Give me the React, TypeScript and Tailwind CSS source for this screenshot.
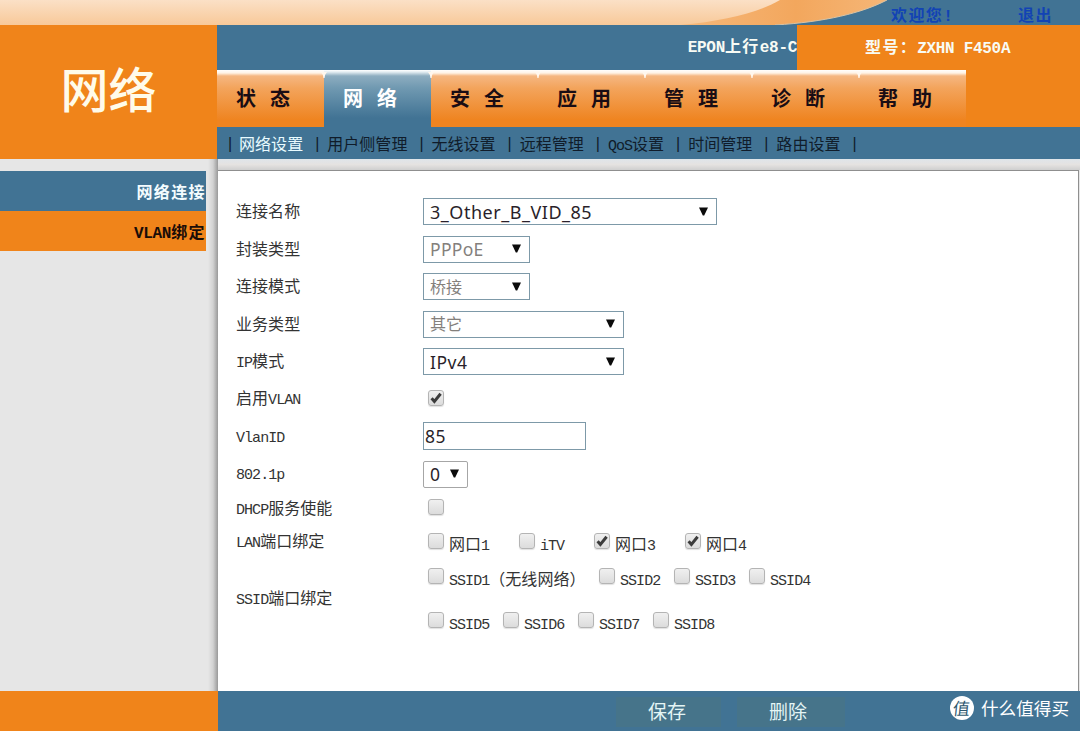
import type { ReactNode } from "react";
import clsx from "clsx";

const tabs = ["状态", "网络", "安全", "应用", "管理", "诊断", "帮助"];

const subTabs = [
  "网络设置",
  "用户侧管理",
  "无线设置",
  "远程管理",
  "QoS设置",
  "时间管理",
  "路由设置"
];

// Latin runs sit on a half-width grid next to the full-width Chinese glyphs.
function Mixed({ text, bold = false }: { text: string; bold?: boolean }) {
  const parts = text.split(/([\x20-\x7e]+)/).filter(Boolean);

  return (
    <span className="inline-block leading-5 whitespace-pre">
      {parts.map((part, index) =>
        /^[\x20-\x7e]/.test(part) ? (
          <span
            key={index}
            className={clsx(
              "font-['Liberation_Mono',monospace] leading-none",
              bold ? "text-[16px] tracking-[-0.3px]" : "text-[15px] tracking-[-0.95px]"
            )}
          >
            {part}
          </span>
        ) : (
          <span key={index} className={bold ? "tracking-[1.4px]" : "tracking-[0.05px]"}>
            {part}
          </span>
        )
      )}
    </span>
  );
}

function Banner() {
  return (
    <header className="relative h-[25px] bg-[#417394]">
      <svg className="absolute inset-0" width="1080" height="25" viewBox="0 0 1080 25">
        <defs>
          <linearGradient id="peach" x1="0" y1="0" x2="0" y2="1">
            <stop offset="0" stopColor="#fbe0c6" />
            <stop offset="1" stopColor="#f8c999" />
          </linearGradient>
          <linearGradient id="swoosh" x1="0" y1="0" x2="1" y2="0">
            <stop offset="0" stopColor="#f6bb80" />
            <stop offset="0.6" stopColor="#f3a75d" />
            <stop offset="1" stopColor="#f5b677" />
          </linearGradient>
        </defs>
        <path d="M660 0H887C862 13 825 22 775 25H660Z" fill="url(#swoosh)" />
        <path d="M887 0C862 13 825 22 775 25" fill="none" stroke="#d9c3a4" strokeWidth="1" />
        <path d="M0 0H780C758 13 725 21 680 25H0Z" fill="url(#peach)" />
      </svg>
      <div className="relative flex h-[28px] items-center pl-[891px] text-[16px] font-bold text-[#1243b4]">
        <div className="w-[127px]">
          <Mixed text="欢迎您!" bold />
        </div>
        <Mixed text="退出" bold />
      </div>
    </header>
  );
}

function MainTab({ label, active, last }: { label: string; active: boolean; last: boolean }) {
  return (
    <div
      className={clsx(
        "relative flex h-[57px] w-[107px] items-center justify-start gap-[14px] pb-[2px] pl-[19px] text-[20px] font-bold",
        active
          ? "bg-[linear-gradient(#ffffff_0px,#e3edf2_2px,#8dadc0_6px,#7099b1_18px,#417394_48px)] text-white"
          : "bg-[linear-gradient(#ffffff_0px,#fff3e6_3px,#f5b782_6px,#f3a45c_18px,#ef8420_50px)] text-[#1a0d14]"
      )}
    >
      <span>{label[0]}</span>
      <span>{label[1]}</span>
      {!last && (
        <svg className="absolute -right-[3px] top-0 z-10" width="6" height="8" viewBox="0 0 6 8">
          <path d="M0 2Q2 4 2.4 8H3.6Q4 4 6 2Z" fill="#fff7ee" />
        </svg>
      )}
    </div>
  );
}

function Separator({ className }: { className?: string }) {
  return (
    <span
      className={clsx(
        "w-[10px] pt-[2px] text-center font-['Liberation_Sans',sans-serif] text-[16px] leading-none",
        className
      )}
    >
      |
    </span>
  );
}

function Arrow() {
  return (
    <svg className="mb-[1px]" width="9" height="9" viewBox="0 0 9 9">
      <path d="M0 0.5H9L5.2 8.5H3.8Z" fill="#0b0b0b" />
    </svg>
  );
}

function SelectBox({
  value,
  className,
  disabled = false
}: {
  value: string;
  className: string;
  disabled?: boolean;
}) {
  return (
    <div
      className={clsx(
        "flex h-[27px] items-center justify-between border bg-white pl-[6px]",
        disabled ? "text-[#84807c]" : "text-[#2a1f2a]",
        className
      )}
    >
      <span className="font-['Noto_Sans','Noto_Sans_CJK_SC',sans-serif] leading-6">{value}</span>
      <Arrow />
    </div>
  );
}

function Check({ checked = false }: { checked?: boolean }) {
  return (
    <span className="block size-4 shrink-0 rounded-[3px] border border-[#b4b4b4] bg-linear-to-b from-[#f0f0f0] to-[#dcdcdc] shadow-[0_1px_1px_rgba(0,0,0,0.12)]">
      {checked && (
        <svg width="14" height="14" viewBox="0 0 14 14">
          <path
            d="M2.6 7.2L5.4 10.4L11.6 2.8"
            fill="none"
            stroke="#3c3c3c"
            strokeWidth="3"
          />
        </svg>
      )}
    </span>
  );
}

function PortOption({
  label,
  className,
  checked
}: {
  label: string;
  className: string;
  checked?: boolean;
}) {
  return (
    <div className={clsx("flex items-start gap-[5px]", className)}>
      <Check checked={checked} />
      <Mixed text={label} />
    </div>
  );
}

function Row({
  label,
  className = "h-[37.5px]",
  children
}: {
  label: string;
  className?: string;
  children: ReactNode;
}) {
  return (
    <div className={clsx("flex items-center", className)}>
      <div className="w-[187px] shrink-0 pb-[3px]">
        <Mixed text={label} />
      </div>
      {children}
    </div>
  );
}

function ConnectionForm() {
  return (
    <main className="w-[861px] border-t border-r border-[#8f8f8f] bg-white pt-[22px] pl-[18px] text-[16px] leading-5 text-[#333]">
      <Row label="连接名称">
        <SelectBox
          value="3_Other_B_VID_85"
          className="w-[294px] border-[#7d99a8] pr-[8px] text-[18px] tracking-[0.52px]"
        />
      </Row>
      <Row label="封装类型">
        <SelectBox
          value="PPPoE"
          className="w-[107px] border-[#7d99a8] pr-[8px] text-[17.5px] tracking-[0.3px]"
          disabled
        />
      </Row>
      <Row label="连接模式">
        <SelectBox value="桥接" className="w-[107px] border-[#7d99a8] pr-[8px] text-[16px]" disabled />
      </Row>
      <Row label="业务类型">
        <SelectBox value="其它" className="w-[201px] border-[#7d99a8] pr-[8px] text-[16px]" disabled />
      </Row>
      <Row label="IP模式">
        <SelectBox
          value="IPv4"
          className="w-[201px] border-[#7d99a8] pr-[8px] text-[17.5px] tracking-[0.5px]"
        />
      </Row>
      <Row label="启用VLAN">
        <div className="pb-[3px] pl-[5px]">
          <Check checked />
        </div>
      </Row>
      <Row label="VlanID">
        <div className="mb-[2px] flex h-7 w-[163px] items-center border border-[#7d99a8] pl-[1px] font-['Noto_Sans',sans-serif] text-[17.5px] tracking-[0.5px] text-[#2a1f2a]">
          85
        </div>
      </Row>
      <Row label="802.1p">
        <SelectBox value="0" className="w-[45px] rounded-[2px] border-[#a6a6a6] pr-[8px] text-[17.5px]" />
      </Row>
      <Row label="DHCP服务使能" className="h-[31px]">
        <div className="pb-[3px] pl-[5px]">
          <Check />
        </div>
      </Row>
      <Row label="LAN端口绑定" className="h-[36px]">
        <div className="flex pt-[3px] pl-[5px]">
          <PortOption label="网口1" className="w-[91px]" />
          <PortOption label="iTV" className="w-[75px]" />
          <PortOption label="网口3" className="w-[91px]" checked />
          <PortOption label="网口4" className="w-[91px]" checked />
        </div>
      </Row>
      <Row label="SSID端口绑定" className="h-[78px]">
        <div className="flex flex-col gap-6 pt-[2px] pl-[5px]">
          <div className="flex h-5">
            <PortOption label="SSID1（无线网络）" className="w-[171px]" />
            <PortOption label="SSID2" className="w-[75px]" />
            <PortOption label="SSID3" className="w-[75px]" />
            <PortOption label="SSID4" className="w-[75px]" />
          </div>
          <div className="flex h-5">
            <PortOption label="SSID5" className="w-[75px]" />
            <PortOption label="SSID6" className="w-[75px]" />
            <PortOption label="SSID7" className="w-[75px]" />
            <PortOption label="SSID8" className="w-[75px]" />
          </div>
        </div>
      </Row>
    </main>
  );
}

export default function App() {
  return (
    <div className="flex h-[731px] w-[1080px] flex-col overflow-hidden bg-[#e6e6e6] font-['Noto_Sans_CJK_SC',sans-serif]">
      <Banner />

      <div className="flex h-[134px]">
        <div className="flex w-[217px] items-center justify-center bg-[#f0841a] pb-[11px] text-[48px] leading-none font-medium text-[#fffbea]">
          网络
        </div>
        <div className="flex flex-1 flex-col">
          <div className="flex h-[102px] flex-col bg-[linear-gradient(90deg,#417394_580px,#f0841a_580px)]">
            <div className="flex h-[45px] items-center pb-[4px] text-[16px] font-bold text-[#f8fbf4]">
              <div className="flex w-[580px] justify-end">
                <Mixed text="EPON上行e8-C" bold />
              </div>
              <div className="pl-[68px]">
                <Mixed text="型号：ZXHN F450A" bold />
              </div>
            </div>
            <nav className="flex">
              {tabs.map((tab, index) => (
                <MainTab
                  key={tab}
                  label={tab}
                  active={tab === "网络"}
                  last={index === tabs.length - 1}
                />
              ))}
            </nav>
          </div>
          <nav className="flex h-8 items-center bg-[#417394] pl-[8px] text-[16px] text-[#101c2a]">
            {subTabs.map((item, index) => (
              <span key={item} className="flex items-center">
                <Separator className={index === 0 ? "mr-[4px]" : "mr-[5px] ml-[9px]"} />
                <span className={index === 0 ? "text-[#e9fbff]" : ""}>
                  <Mixed text={item} />
                </span>
              </span>
            ))}
            <Separator className="ml-[9px]" />
          </nav>
        </div>
      </div>

      <div className="flex h-[532px]">
        <aside className="flex w-[218px] flex-col bg-[linear-gradient(90deg,#e6e6e6_208px,#d2d2d2_213px,#999999_218px)] pt-3">
          <div className="flex h-10 w-[206px] items-center justify-end bg-[#417394] text-[16px] font-bold text-[#f4fcff]">
            <Mixed text="网络连接" bold />
          </div>
          <div className="flex h-10 w-[206px] items-center justify-end bg-[#f0841a] text-[16px] font-bold text-[#1a0d08]">
            <Mixed text="VLAN绑定" bold />
          </div>
        </aside>
        <div className="flex flex-1 flex-col">
          <div className="h-[11px] bg-linear-to-b from-[#dfe5ea] via-[#e5e3e1] to-[#cfcfcf]" />
          <div className="flex flex-1">
            <ConnectionForm />
          </div>
        </div>
      </div>

      <footer className="flex h-10 shrink-0">
        <div className="w-[218px] bg-[#f0841a]" />
        <div className="flex flex-1 items-start bg-[#417394] pt-[6px] pl-[398px] text-[19px] text-[#e4f5f5]">
          <div className="flex h-[30px] w-[105px] items-center bg-[#46748a] pb-[2px] pl-[32px]">保存</div>
          <div className="ml-[16px] flex h-[30px] w-[108px] items-center bg-[#46748a] pb-[2px] pl-[32px]">
            删除
          </div>
          <div className="-mt-[1px] ml-[105px] flex items-center gap-[7px]">
            <span className="flex size-6 items-center justify-center rounded-full bg-white pr-[1px] pb-[2px] text-[17px] leading-none text-[#2e5870]">
              <span className="-skew-x-6">值</span>
            </span>
            <span className="text-[17.6px] leading-6 text-white">什么值得买</span>
          </div>
        </div>
      </footer>
    </div>
  );
}
